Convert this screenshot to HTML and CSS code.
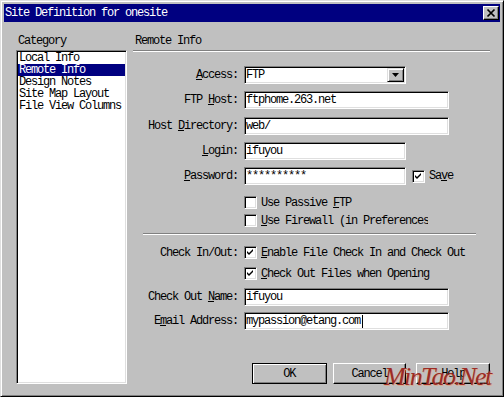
FILE: index.html
```
<!DOCTYPE html>
<html lang="en">
<head>
  <meta charset="UTF-8" />
  <title>Site Definition for onesite</title>
  <link rel="stylesheet" href="styles.css">
</head>
<body>
  <div class="window">
    <div class="titlebar">
      <span class="title">Site Definition for onesite</span>
      <span class="close">
        <svg width="14" height="12" viewBox="0 0 14 12"><path d="M3.5 2.5 L10.5 9.5 M10.5 2.5 L3.5 9.5" stroke="#000" stroke-width="1.7" fill="none"/></svg>
      </span>
    </div>

    <div class="main">
      <div class="category">
        <div class="cat-label">Category</div>
        <div class="listbox">
          <div class="item">Local Info</div>
          <div class="item selected">Remote Info</div>
          <div class="item">Design Notes</div>
          <div class="item">Site Map Layout</div>
          <div class="item">File View Columns</div>
        </div>
      </div>

      <div class="panel">
        <div class="panel-title">Remote Info</div>
        <div class="rule"></div>

        <div class="row mt14">
          <div class="lbl"><u>A</u>ccess:</div>
          <div class="field short select"><span class="val">FTP</span><span class="drop"><svg width="7" height="4" viewBox="0 0 7 4"><path d="M0 0 H7 L3.5 4 Z" fill="#000"/></svg></span></div>
        </div>
        <div class="row mt7">
          <div class="lbl">FTP <u>H</u>ost:</div>
          <div class="field long">ftphome.263.net</div>
        </div>
        <div class="row mt8">
          <div class="lbl">Host <u>D</u>irectory:</div>
          <div class="field long">web/</div>
        </div>
        <div class="row mt7">
          <div class="lbl"><u>L</u>ogin:</div>
          <div class="field short">ifuyou</div>
        </div>
        <div class="row mt7">
          <div class="lbl"><u>P</u>assword:</div>
          <div class="field short">**********</div>
          <span class="check on save"><svg width="9" height="9" viewBox="0 0 9 9"><path d="M1 3 L3 5 L7 1 L7 3 L3 7 L1 5 Z" fill="#000"/></svg></span>
          <span class="cb-text">Sa<u>v</u>e</span>
        </div>

        <div class="row cb-row indent mt11">
          <span class="check"></span>
          <span class="cb-text">Use Passive <u>F</u>TP</span>
        </div>
        <div class="row cb-row indent mt5">
          <span class="check"></span>
          <span class="cb-text clip"><u>U</u>se Firewall (in Preferences)</span>
        </div>

        <div class="rule short-rule"></div>

        <div class="row cb-row mt11">
          <div class="lbl">Check In/Out:</div>
          <span class="check on"><svg width="9" height="9" viewBox="0 0 9 9"><path d="M1 3 L3 5 L7 1 L7 3 L3 7 L1 5 Z" fill="#000"/></svg></span>
          <span class="cb-text"><u>E</u>nable File Check In and Check Out</span>
        </div>
        <div class="row cb-row indent mt8">
          <span class="check on"><svg width="9" height="9" viewBox="0 0 9 9"><path d="M1 3 L3 5 L7 1 L7 3 L3 7 L1 5 Z" fill="#000"/></svg></span>
          <span class="cb-text"><u>C</u>heck Out Files when Opening</span>
        </div>

        <div class="row mt8">
          <div class="lbl">Check Out <u>N</u>ame:</div>
          <div class="field long">ifuyou</div>
        </div>
        <div class="row mt6">
          <div class="lbl">E<u>m</u>ail Address:</div>
          <div class="field long">mypassion@etang.com<span class="caret"></span></div>
        </div>

        <div class="buttons">
          <div class="btn default">OK</div>
          <div class="btn cancel">Cancel</div>
          <div class="btn help">Help</div>
        </div>
      </div>
    </div>

    <div class="watermark">MinTao.Net</div>
  </div>
</body>
</html>
```

FILE: styles.css
```
* {
  box-sizing: border-box;
}
body {
  margin: 0;
  background: #c0c0c0;
}
.window {
  position: relative;
  width: 504px;
  height: 397px;
  background: #c0c0c0;
  border: 1px solid;
  border-color: #dfdfdf #000 #000 #dfdfdf;
  box-shadow: inset 1px 1px 0 #fff, inset -1px -1px 0 #808080;
  padding: 3px 3px 0 3px;
  font-family: "Liberation Mono", monospace;
  font-size: 12px;
  line-height: 12px;
  letter-spacing: -1.2px;
  color: #000;
  overflow: hidden;
}
.titlebar {
  display: flex;
  align-items: center;
  height: 18px;
  padding-left: 1px;
  background: #000080;
  color: #fff;
}
.close {
  display: flex;
  margin-left: auto;
  margin-right: 1px;
  width: 16px;
  height: 14px;
  background: #c0c0c0;
  border: 1px solid;
  border-color: #fff #000 #000 #fff;
  box-shadow: inset -1px -1px 0 #808080;
}
.main {
  display: flex;
}
.category {
  margin-left: 12px;
  width: 111px;
}
.cat-label {
  margin-top: 13px;
  height: 12px;
  padding-left: 2px;
}
.listbox {
  margin-top: 3px;
  height: 334px;
  background: #fff;
  border: 1px solid;
  border-color: #808080 #fff #fff #808080;
  box-shadow: inset 1px 1px 0 #000, inset -1px -1px 0 #dfdfdf;
  padding: 1px;
}
.item {
  height: 12px;
  padding-left: 1px;
}
.item.selected {
  background: #000080;
  color: #fff;
}
.panel {
  margin-left: 6px;
  width: 357px;
}
.panel-title {
  margin-top: 13px;
  height: 12px;
  padding-left: 2px;
}
.rule {
  margin-top: 3px;
  height: 2px;
  border-top: 1px solid #808080;
  border-bottom: 1px solid #fff;
}
.short-rule {
  margin-top: 6px;
  margin-left: 10px;
  width: 333px;
}
.row {
  display: flex;
  align-items: center;
  height: 18px;
}
.cb-row {
  height: 13px;
}
.indent {
  padding-left: 111px;
}
.mt5 { margin-top: 5px; }
.mt6 { margin-top: 6px; }
.mt7 { margin-top: 7px; }
.mt8 { margin-top: 8px; }
.mt11 { margin-top: 11px; }
.mt14 { margin-top: 14px; }
.lbl {
  width: 105px;
  margin-right: 6px;
  text-align: right;
  white-space: nowrap;
}
.field {
  display: flex;
  align-items: center;
  height: 18px;
  padding-left: 1px;
  background: #fff;
  border: 1px solid;
  border-color: #808080 #fff #fff #808080;
  box-shadow: inset 1px 1px 0 #000, inset -1px -1px 0 #dfdfdf;
  white-space: nowrap;
}
.field.short {
  width: 162px;
}
.field.long {
  width: 205px;
}
.select {
  padding-right: 1px;
}
.select .val {
  flex: 1;
}
.drop {
  display: flex;
  align-items: center;
  justify-content: center;
  width: 17px;
  height: 14px;
  background: #c0c0c0;
  border: 1px solid;
  border-color: #dfdfdf #000 #000 #dfdfdf;
  box-shadow: inset 1px 1px 0 #fff, inset -1px -1px 0 #808080;
}
.caret {
  display: inline-block;
  width: 1px;
  height: 13px;
  margin-left: 2px;
  background: #000;
}
.check {
  display: flex;
  align-items: center;
  justify-content: center;
  flex: none;
  width: 13px;
  height: 13px;
  background: #fff;
  border: 1px solid;
  border-color: #808080 #fff #fff #808080;
  box-shadow: inset 1px 1px 0 #000, inset -1px -1px 0 #dfdfdf;
}
.check.save {
  margin-left: 6px;
}
.cb-text {
  margin-left: 4px;
  white-space: nowrap;
}
.cb-text.clip {
  width: 167px;
  overflow: hidden;
}
.buttons {
  display: flex;
  margin-top: 33px;
  padding-left: 119px;
}
.btn {
  display: flex;
  align-items: center;
  justify-content: center;
  width: 74px;
  height: 21px;
  border: 1px solid;
  border-color: #fff #000 #000 #fff;
  box-shadow: inset -1px -1px 0 #808080;
}
.btn.default {
  width: 75px;
  border-color: #000;
  box-shadow: inset 1px 1px 0 #fff, inset -1px -1px 0 #808080;
}
.btn.cancel {
  margin-left: 6px;
}
.btn.help {
  margin-left: 10px;
}
.watermark {
  position: absolute;
  left: 383px;
  top: 362px;
  font-family: "Liberation Serif", serif;
  font-style: italic;
  font-size: 26px;
  line-height: 28px;
  letter-spacing: -1.6px;
  color: #9c2b25;
  text-shadow: 1px 1px 0 #d9ad92;
}
```
